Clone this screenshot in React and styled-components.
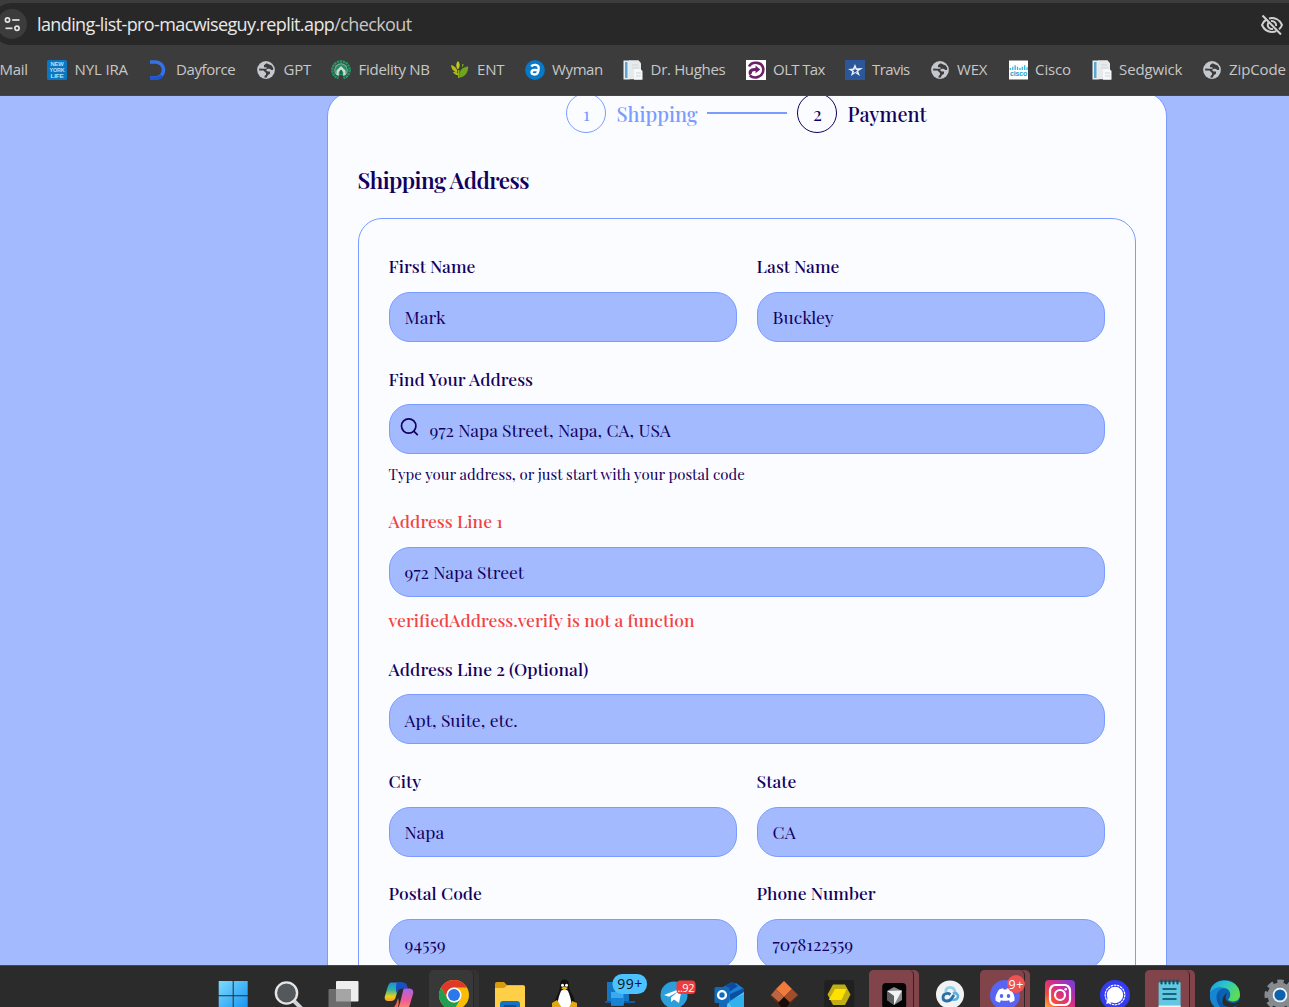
import React from "react";
import styled, { createGlobalStyle } from "styled-components";

const Global = createGlobalStyle`
  * { box-sizing: border-box; }
  html, body { margin: 0; background: #a3baff; overflow: hidden; }
`;

const serif = `"Playfair Display", "Liberation Serif", serif`;
const sans = `"Segoe UI", "Open Sans", sans-serif`;

const Screen = styled.div`
  width: 1289px;
  height: 1007px;
  display: flex;
  flex-direction: column;
  overflow: hidden;
`;

/* ---------- browser chrome ---------- */
const Toolbar = styled.header`
  flex: none;
  height: 96px;
  padding-top: 3px;
  background: #3c3c3c;
  border-bottom: 1px solid #454545;
  font-family: ${sans};
  overflow: hidden;
`;
const AddressBar = styled.div`
  height: 42px;
  margin-left: -9px;
  padding: 0 5px 0 6px;
  display: flex;
  align-items: center;
  background: #282828;
  border-radius: 21px 0 0 21px;
`;
const SiteInfo = styled.span`
  width: 30px;
  height: 30px;
  border-radius: 50%;
  background: #3c3c3c;
  display: flex;
  align-items: center;
  justify-content: center;
`;
const Url = styled.span`
  margin-left: 10px;
  flex: 1;
  font-size: 18px;
  letter-spacing: ${(p) => p.$ls}px;
  line-height: 24px;
  color: #e8e8e8;
  white-space: nowrap;
`;
const Path = styled.span`
  color: #c7c7c7;
`;
const Bookmarks = styled.nav`
  height: 50px;
  display: flex;
  align-items: center;
`;
const Bookmark = styled.div`
  flex: none;
  width: ${(p) => p.$w}px;
  display: flex;
  align-items: center;
  gap: 8px;
  font-size: 15px;
  line-height: 20px;
  color: #c7c7c7;
  letter-spacing: ${(p) => p.$ls}px;
  white-space: nowrap;
  svg { flex: none; }
`;
const BookmarkName = styled.span`
  margin: -2px 0 0 -0.4px;
`;

/* ---------- checkout page ---------- */
const Page = styled.main`
  height: 869px;
  flex: none;
  overflow: hidden;
  display: flex;
  justify-content: center;
  align-items: flex-start;
  padding-left: 205px;
  background: #a3baff;
  color: #12005e;
  font-family: ${serif};
`;
const Card = styled.section`
  width: 840px;
  height: 960px;
  flex: none;
  margin-top: -4px;
  padding: 0 30px;
  border: 1px solid #7b9cff;
  border-radius: 24px;
  background: #fbfcff;
  display: flex;
  flex-direction: column;
`;
const Steps = styled.div`
  height: 40px;
  flex: none;
  display: flex;
  align-items: center;
  padding-left: 208px;
`;
const Step = styled.div`
  width: ${(p) => p.$w}px;
  display: flex;
  align-items: center;
  gap: 10.5px;
  color: ${(p) => p.$color};
`;
const StepDot = styled.span`
  flex: none;
  width: 40px;
  height: 40px;
  padding: 1px 0 0 1px;
  border: 1.5px solid currentColor;
  border-radius: 50%;
  display: flex;
  align-items: center;
  justify-content: center;
  font-size: 18.5px;
  line-height: 20px;
`;
const StepName = styled.span`
  padding-top: 1px;
  font-size: 20px;
  font-weight: 500;
  line-height: 28px;
  white-space: nowrap;
`;
const StepLine = styled.span`
  width: 80px;
  height: 2px;
  margin-right: 10px;
  background: #7b9cff;
`;
const Title = styled.h2`
  flex: none;
  margin: 31px 0 22px -0.5px;
  height: 32px;
  font-size: 22.5px;
  line-height: 32px;
  font-weight: 600;
  letter-spacing: -0.56px;
`;
const Panel = styled.div`
  flex: none;
  height: 800px;
  padding: 36px 30px 0;
  border: 1px solid #7b9cff;
  border-radius: 24px;
  display: flex;
  flex-direction: column;
  gap: 25.4px;
`;
const Row = styled.div`
  display: grid;
  grid-template-columns: ${(p) => (p.$two ? "1fr 1fr" : "1fr")};
  column-gap: 20px;
`;
const Field = styled.div`
  display: flex;
  flex-direction: column;
`;
const Label = styled.label`
  height: 24px;
  margin: -0.7px 0 13.7px -0.4px;
  font-size: 17.5px;
  font-weight: 500;
  line-height: 24px;
  color: ${(p) => (p.$error ? "#ef4444" : "#12005e")};
  white-space: nowrap;
`;
const Control = styled.div`
  height: 50px;
  padding: 0.4px 14.6px 0 ${(p) => (p.$icon ? 8.6 : 14.6)}px;
  border: 1px solid #7b9cff;
  border-radius: 21px;
  background: #a3baff;
  display: flex;
  align-items: center;
  font-size: 17.5px;
  line-height: 24px;
  white-space: nowrap;
  svg { margin: -4.4px 11px 0 0; flex: none; }
`;
const Hint = styled.div`
  height: 30.2px;
  margin-left: -0.4px;
  padding-top: 10px;
  font-size: 15px;
  line-height: 20px;
  white-space: nowrap;
`;
const ErrorText = styled.div`
  height: 35px;
  margin-left: -0.4px;
  padding-top: 11px;
  font-size: 17.5px;
  font-weight: 500;
  line-height: 23px;
  color: #ef4444;
  white-space: nowrap;
`;

/* ---------- taskbar ---------- */
const Taskbar = styled.footer`
  height: 42px;
  flex: none;
  padding: 4px 0 0 208.3px;
  background: #2b2b2b;
  border-top: 1px solid #464848;
  display: flex;
  gap: 5.1px;
  overflow: hidden;
`;
const Slot = styled.div`
  flex: none;
  width: 50px;
  height: 50px;
  border-radius: 5px;
  background: ${(p) => p.$back || "transparent"};
`;
const SlotFront = styled.div`
  width: ${(p) => (p.$front ? 45 : 50)}px;
  height: 50px;
  border-radius: 5px;
  background: ${(p) => p.$front || "transparent"};
  border-right: ${(p) => (p.$front ? "1px solid #2b2525" : "none")};
  svg { display: block; overflow: visible; }
`;

/* ---------- bookmark icons ---------- */
const Ico = ({ children, w = 20 }) => (
  <svg width={w} height="20" viewBox="0 0 20 20">{children}</svg>
);
const Globe = () => (
  <Ico>
    <circle cx="10" cy="10" r="8.9" fill="#c4c7cc" />
    <path d="M10.500 3.200 8 5.200v2h2.500v1.600H6.500L3.400 8.600 3 10.500h4.500l2.500 2.500v1.800L8.500 16v1.500l2 .2 1.500-2.700 2-1.200v-2.300h-2.300l-1.800-1.600 1.800-1.100h1.800l2 1.200h1.600l.1-2-1.500-2.600-2.500-1z" fill="#3c3c3c" />
  </Ico>
);
const Nyl = () => (
  <Ico>
    <rect width="20" height="20" rx="1.500" fill="#0b76c2" />
    <g fontFamily="Liberation Sans" fontWeight="700" fontSize="4.600" fill="#b9e0f7" textAnchor="middle">
      <text x="10" y="6.200" textLength="13" lengthAdjust="spacingAndGlyphs">NEW</text>
      <text x="10" y="11.900" textLength="15" lengthAdjust="spacingAndGlyphs">YORK</text>
      <text x="10" y="17.600" textLength="13" lengthAdjust="spacingAndGlyphs">LIFE</text>
    </g>
  </Ico>
);
const Day = () => (
  <Ico>
    <path d="M1 2h5.500a8 8 0 0 1 0 16H1" fill="none" stroke="#3572e8" strokeWidth="3.600" />
    <path d="M1 16.400h6a7 7 0 0 0 5-2l2 2.400A9 9 0 0 1 7 20H1z" fill="#1f55cf" />
  </Ico>
);
const Fidelity = () => (
  <Ico>
    <circle cx="10" cy="10" r="8.600" fill="none" stroke="#239464" strokeWidth="2.600" strokeDasharray="2.400 .6" />
    <circle cx="10" cy="10" r="6.800" fill="#7fb8a0" />
    <circle cx="10" cy="10" r="5.800" fill="#2b8c64" />
    <path d="M5.500 15v-4.500L10 6l4.500 4.500V15h-2.300v-3L10 9.800 7.800 12v3z" fill="#c5ded2" />
    <path d="M7 20l1.500-5h3L13 20z" fill="#3c3c3c" />
    <path d="M10 10v4" stroke="#165b40" strokeWidth="1.500" />
  </Ico>
);
const Leaf = () => (
  <Ico>
    <path d="M8 1C5.500 4 6 7 7.800 9.500 10 7 10.500 4 8 1z" fill="#c0cc1c" />
    <path d="M1 5c.5 4.500 3 7 6.500 7.500C7.500 9 5 6 1 5zM3 12c1.500 2.500 3.500 3.300 5.500 3-.5-2.500-2.500-3.500-5.500-3z" fill="#b2be18" />
    <path d="M18.300 6.500c-6 .5-9.500 4-8.800 11C15 17 18 13 18.300 6.500zM12 4l2 .5-2 3z" fill="#6ea51c" />
    <path d="M8.700 10v8" stroke="#8fae17" strokeWidth="1.500" />
  </Ico>
);
const Wyman = () => (
  <Ico>
    <circle cx="10" cy="10" r="9.900" fill="#0878c8" />
    <path d="M6.200 6.500c1.500-2.300 7.500-2.300 7.500 1.500 0 3-1 6.500-4.200 6.500-4 0-4-4.300 0-4.500 2-.1 3.500.3 4.500 1" fill="none" stroke="#fff" strokeWidth="2.300" />
  </Ico>
);
const Docs = () => (
  <Ico>
    <path d="M.5.500h6v19h-6z" fill="#e9eef2" />
    <path d="M2 2h2.500v16H2z" fill="#5ca6cf" />
    <path d="M6 .3h9.500l2.500 3v16H6z" fill="#e6eaed" />
    <path d="M11 9h6.500l2 2v8.700H11z" fill="#f6f8f9" />
    <path d="M9 5h6M9 8h7" stroke="#cfd5da" />
    <path d="M13 13h5M13 16h5" stroke="#cdd4d9" />
  </Ico>
);
const Olt = () => (
  <Ico>
    <rect width="20" height="20" fill="#fff" />
    <path d="M3 6.500C6 1 16.500 1.500 17.300 9c.5 8-9 10.500-13.500 6.500" fill="none" stroke="#6b2268" strokeWidth="2.600" />
    <path d="M3.500 15.500c-2.500-5 1-8 6-7.500V5.500l4.800 4-4.800 3.800v-2.300c-2.500-.3-3.700.6-3.500 2.200" fill="#6b2268" />
  </Ico>
);
const Travis = () => (
  <Ico>
    <rect width="20" height="20" fill="#2b579a" />
    <path d="m10 4 1.700 4.300L18 8l-4.800 3.200L15 16l-4.700-3L6 16l1.200-4.600L3 9l5-.5z" fill="#e8edf8" />
    <path d="m10 8 .8 2 2 .1-1.600 1.200.6 1.700-1.700-1-1.700 1 .6-1.900L7.500 10h1.800z" fill="#2b579a" />
  </Ico>
);
const Cisco = () => (
  <Ico w={19}>
    <rect width="20" height="20" fill="#fff" />
    <path d="M1.500 8v2M4 6.500V10M6.500 5V10M9 6.500V10M11.500 8v2M14 6.500V10M16.500 5V10M19 7v3" stroke="#37b5dc" strokeWidth="1.400" />
    <text x="1" y="16" fontSize="7" fontWeight="700" fontFamily="Liberation Sans" fill="#1ba0d0" textLength="18" lengthAdjust="spacingAndGlyphs">cisco</text>
  </Ico>
);

/* ---------- taskbar icons ---------- */
const T = ({ children }) => (
  <svg width="50" height="42" viewBox="0 0 50 42">{children}</svg>
);
const TASKS = [
  {
    art: (
      <T>
        <defs><linearGradient id="win" x1="0" y1="0" x2="1" y2="1"><stop stopColor="#7ddcff" /><stop offset="1" stopColor="#0f8ff0" /></linearGradient></defs>
        <path d="M10.700 11h14v14.200h-14zM25.700 11h14v14.200h-14zM10.700 26.200h14V41h-14zM25.700 26.200h14V41h-14z" fill="url(#win)" />
      </T>
    ),
  },
  {
    art: (
      <T>
        <path d="m31 31 9 9" stroke="#cfd3d5" strokeWidth="4" />
        <circle cx="23.500" cy="23" r="10.600" fill="#55585a" stroke="#e3e5e6" strokeWidth="2.400" />
      </T>
    ),
  },
  {
    art: (
      <T>
        <rect x="18" y="11" width="22.500" height="20.500" rx="1" fill="#efefef" />
        <rect x="10.500" y="19" width="22.500" height="22" rx="1" fill="#6c6c6c" />
        <rect x="18" y="19" width="15" height="12.500" fill="#a5a5a5" />
      </T>
    ),
  },
  {
    art: (
      <T>
        <defs>
          <linearGradient id="cpa" x1="0" y1="0" x2="0" y2="1"><stop stopColor="#1a8fe8" /><stop offset=".4" stopColor="#32b39b" /><stop offset=".75" stopColor="#e9cf1f" /><stop offset="1" stopColor="#f5a02c" /></linearGradient>
          <linearGradient id="cpb" x1="0" y1="0" x2="0" y2="1"><stop stopColor="#a765ee" /><stop offset=".5" stopColor="#ee5a9a" /><stop offset="1" stopColor="#ff9860" /></linearGradient>
        </defs>
        <path d="M17.500 12.500H29c-3 1-4 4-5 7l-2.500 8c-.5 2-2 3.500-4.500 3.500h-2.500c-3 0-4.500-2-3.500-5l2.500-8.500c1-3 2-5 4-5z" fill="url(#cpa)" />
        <path d="M23 12.500h6c3 0 4 2 5 6h-5c-3 0-5 1-6.500 4.500-1-4-.5-8.500.5-10.500z" fill="#174fc4" />
        <path d="M31 18.500h4c3.500 0 5 2.500 4 5.500l-3 10c-1 4-3 7-6 7H20c4-1 5-4 6-8l3-12c.5-2 .5-2.500 2-2.500z" fill="url(#cpb)" />
        <path d="M20 37c2-2 3-5 4-9 1 3 1 6 0 9l-2 4h-4z" fill="#f4694e" />
      </T>
    ),
  },
  {
    front: "#383838",
    back: "#333",
    art: (
      <T>
        <circle cx="25" cy="25" r="15" fill="#fbbc05" />
        <path d="M12 17.500A15 15 0 0 1 38 17.500H25a7.500 7.500 0 0 0-6.500 11.200z" fill="#e0392b" />
        <path d="M12 17.500 18.500 28.700A7.500 7.500 0 0 0 31.500 28.700L25 40A15 15 0 0 1 12 17.500z" fill="#1f9d50" />
        <circle cx="25" cy="25" r="7.600" fill="#fff" />
        <circle cx="25" cy="25" r="6" fill="#2b78ea" />
      </T>
    ),
  },
  {
    art: (
      <T>
        <path d="M11 14q0-2 2-2h7l3 3h16q2 0 2 2v4H11z" fill="#d99a0c" />
        <path d="M11 18h9l3-2.500h16q2 0 2 2v23.500H11z" fill="#ffcf48" />
        <path d="M16 41v-7q0-3 3-3h14q3 0 3 3v7z" fill="#1273c5" />
        <path d="M20 36h12" stroke="#0a4f92" strokeWidth="2" />
      </T>
    ),
  },
  {
    art: (
      <T>
        <path d="M21 14c0-6 9-6 9 0 0 5 1 7 4 12 2 4 2 9 0 15H17c-2-6-2-10 1-15 2-4 3-7 3-12z" fill="#101010" />
        <path d="M22 21c2-2 5-2 7 0 2 5 4 10 3 16-4 4-9 4-13 0-1-6 1-11 3-16z" fill="#fff" />
        <circle cx="23.500" cy="15.300" r="1.500" fill="#fff" /><circle cx="27.500" cy="15.300" r="1.500" fill="#fff" />
        <path d="m22 18 3.500-1.500L29 18l-3.500 2.500z" fill="#efb018" />
        <path d="m13 33 5-3 5 8-1 4h-9zM38 33l-5-2-3 7 1 4h7z" fill="#e2a713" />
      </T>
    ),
  },
  {
    art: (
      <T>
        <path d="M13 12h22v20H13z" fill="#1377c4" />
        <path d="M11 31h30v2H11z" fill="#0c5b9d" />
        <path d="M17 22h12.500v13.500H17z" fill="#37aaf0" />
        <path d="M17 28h12.500v7.500H17z" fill="#1883d4" />
        <rect x="18.500" y="4" width="34.500" height="20" rx="9.500" fill="#4cc2ff" />
        <text x="35.800" y="19" fontFamily="Segoe UI, Open Sans" fontSize="14" fill="#101010" textAnchor="middle" textLength="25">99+</text>
      </T>
    ),
  },
  {
    art: (
      <T>
        <circle cx="25" cy="25" r="13.500" fill="#2b9fda" />
        <path d="m15 25 18-7-3 15-5-3.500-3 2.500v-4.500l7-6-9 5.200z" fill="#fff" />
        <rect x="27.500" y="10.500" width="19" height="13.500" rx="4" fill="#ee3c3c" />
        <text x="37" y="21.500" fontFamily="Segoe UI, Open Sans" fontSize="11" fill="#fff" textAnchor="middle" textLength="17">..92</text>
      </T>
    ),
  },
  {
    art: (
      <T>
        <path d="m15 19 13-7L40 19v22H15z" fill="#1267b8" />
        <path d="m19 22 13-9 8 6-17 13z" fill="#1a7fd6" />
        <path d="M24 31 40 20v21H22z" fill="#50c8f5" />
        <path d="m24 31 16-7v17H30z" fill="#2fb1ee" />
        <path d="m22 16 6-3.700 6 3.700-9 6z" fill="#0a4ca2" />
        <path d="m26 24 14-6v4l-14 9z" fill="#0b4fa5" />
        <rect x="10.500" y="17" width="15" height="16" rx="1.500" fill="#0f6cbd" />
        <circle cx="18" cy="25" r="3.900" fill="none" stroke="#fff" strokeWidth="2.400" />
      </T>
    ),
  },
  {
    art: (
      <T>
        <path d="m25 11 14 14.500L25 41 11 25.500z" fill="#5e2a18" />
        <path d="m25 11 8 8-8 8-8-8z" fill="#f17a3d" />
        <path d="m17 19 8 8-5 5-8-7z" fill="#bc6540" /><path d="m33 19 6 6-8 7-6-5z" fill="#a14c2b" />
        <path d="m25 27 6 6-6 8-6-8z" fill="#160c09" />
      </T>
    ),
  },
  {
    art: (
      <T>
        <rect x="10.200" y="10" width="30" height="31" rx="3" fill="#202020" />
        <path d="M19 14.500h12l5.500 10L31 35H19l-5.500-10.500z" fill="#c1ae13" />
        <path d="M21 19h11.500l-5 11H14.800z" fill="#ffe100" />
      </T>
    ),
  },
  {
    front: "#80444a",
    back: "#80444a",
    art: (
      <T>
        <rect x="13.200" y="13" width="24" height="26" rx="4" fill="#050505" />
        <path d="m25 17 8 4v9l-8 5-7-5v-9z" fill="#8c8c8c" />
        <path d="m18 21 15-.5L25 35V26z" fill="#f2f2f2" /><path d="m18 21 7 5v9l-7-5z" fill="#5f5f5f" />
      </T>
    ),
  },
  {
    art: (
      <T>
        <circle cx="25" cy="24.500" r="14" fill="#f0f2f3" />
        <path d="M21 22.500c-1.500-7 9.500-7 9 .5" fill="none" stroke="#8fd0ee" strokeWidth="2.800" />
        <path d="M28 23.500c3.500-1.500 6 1.500 4.500 4.500-1.300 2.300-5 2.300-7 .5" fill="none" stroke="#5db0dc" strokeWidth="2.600" />
        <path d="M25.500 24.500c-3-2-7.500-1-7.500 3 0 4.500 6.500 4.500 8.500 1l2.500-3.500" fill="none" stroke="#2a6fa9" strokeWidth="2.800" />
      </T>
    ),
  },
  {
    front: "#80444a",
    back: "#80444a",
    art: (
      <T>
        <circle cx="25" cy="25" r="15" fill="#5865f2" />
        <path d="M19 19.500c1.500-.8 3-1.200 4-1.300l.7 1.300h2.600l.7-1.300c1.500.2 3 .7 4 1.300 2.500 3.500 4 7.500 3.500 11-1.500 1.200-3 1.700-4.300 2l-1.200-2.200c-2.500.7-5.500.7-8 0L19.800 32.500c-1.500-.3-3-.9-4.300-2-.5-3.800 1-7.500 3.500-11z" fill="#fff" />
        <ellipse cx="21.500" cy="26" rx="1.800" ry="2" fill="#5865f2" /><ellipse cx="28.500" cy="26" rx="1.800" ry="2" fill="#5865f2" />
        <circle cx="36" cy="14" r="9" fill="#ee5253" />
        <text x="36" y="18.500" fontFamily="Segoe UI, Open Sans" fontSize="12.500" fill="#fff" textAnchor="middle" textLength="15">9+</text>
      </T>
    ),
  },
  {
    art: (
      <T>
        <defs>
          <linearGradient id="ig" x1="0" y1="1" x2="1" y2="0"><stop stopColor="#ffc63c" /><stop offset=".3" stopColor="#f7483c" /><stop offset=".6" stopColor="#cf2d91" /><stop offset="1" stopColor="#6b3fe0" /></linearGradient>
        </defs>
        <rect x="10" y="10" width="30" height="30" rx="4" fill="url(#ig)" />
        <rect x="15" y="15" width="20" height="20" rx="5.500" fill="none" stroke="#fff" strokeWidth="2.200" />
        <circle cx="25" cy="25" r="5" fill="none" stroke="#fff" strokeWidth="2.200" /><circle cx="30.700" cy="19.300" r="1.300" fill="#fff" />
      </T>
    ),
  },
  {
    art: (
      <T>
        <circle cx="25" cy="25" r="15" fill="#333cf0" />
        <circle cx="25" cy="25" r="9.800" fill="none" stroke="#fff" strokeWidth="1.200" strokeDasharray="2.500 .7" />
        <circle cx="25" cy="25" r="8.200" fill="#fff" /><path d="m18 27-2 7 7-2z" fill="#fff" />
      </T>
    ),
  },
  {
    front: "#80444a",
    back: "#80444a",
    art: (
      <T>
        <rect x="13.600" y="12" width="22" height="29" rx="1.500" fill="#62c7e0" />
        <path d="M13.600 35.500h22V41h-22z" fill="#f1f3f4" />
        <path d="M16.500 10.500v3M20.500 10.500v3M24.500 10.500v3M28.500 10.500v3M32.500 10.500v3" stroke="#124f63" strokeWidth="2.200" strokeLinecap="round" />
        <path d="M17.500 19h14M17.500 24h14M17.500 29h14" stroke="#17647e" strokeWidth="1.800" />
      </T>
    ),
  },
  {
    art: (
      <T>
        <defs>
          <linearGradient id="edge" x1="0" y1="0" x2="1" y2=".4"><stop stopColor="#1a9be0" /><stop offset=".5" stopColor="#2bc6c8" /><stop offset="1" stopColor="#5bdc58" /></linearGradient>
        </defs>
        <circle cx="25" cy="25" r="15" fill="#0c62b0" />
        <path d="M10 23C10 6 40 6 40 25c0 6-7 8-12 5 4-4 3-12-5-12-6 0-10 2-13 5z" fill="url(#edge)" />
        <path d="M10 24c2-6 9-8 14-6-6 1-9 7-7 13 1 4 4 7 8 9C15 41 9 33 10 24z" fill="#1586d4" />
        <path d="M28 22c-3 3-4 8 1 10 4 2 8 1 11-2v11H28c-7-5-8-14 0-19z" fill="#2b2b2b" />
        <path d="M21 22c-4 6 0 14 8 15 4 .5 7-1 9-3-3 5-8 6-12 6-8-1-12-13-5-18z" fill="#0a55a4" />
      </T>
    ),
  },
  {
    art: (
      <T>
        <circle cx="25" cy="25" r="10" fill="none" stroke="#868b90" strokeWidth="5" />
        <circle cx="25" cy="25" r="13" fill="none" stroke="#868b90" strokeWidth="5" strokeDasharray="6.200 4.010" strokeDashoffset="3" />
        <circle cx="25" cy="25" r="7.500" fill="#f1f3f4" /><circle cx="25" cy="25" r="5.600" fill="#0c62ae" />
      </T>
    ),
  },
];

const BOOKMARKS = [
  ["Mail", 47, null, -0.3],
  ["NYL IRA", 101.5, Nyl, -0.15],
  ["Dayforce", 107.5, Day, -0.42],
  ["GPT", 75, Globe, -0.3],
  ["Fidelity NB", 118.5, Fidelity, -0.3],
  ["ENT", 75, Leaf, -0.3],
  ["Wyman", 98.5, Wyman, -0.42],
  ["Dr. Hughes", 122.5, Docs, -0.33],
  ["OLT Tax", 99, Olt, -0.65],
  ["Travis", 85, Travis, -0.6],
  ["WEX", 79, Globe, -0.3],
  ["Cisco", 83, Cisco, -0.15],
  ["Sedgwick", 110, Docs, -0.15],
  ["ZipCode", 100, Globe, -0.15],
];

const Input = ({ label, value, error, icon, children }) => (
  <Field>
    <Label $error={error}>{label}</Label>
    <Control $icon={!!icon}>{icon}<span>{value}</span></Control>
    {children}
  </Field>
);

const SearchIcon = () => (
  <svg width="20" height="20" viewBox="0 0 20 20" fill="none" stroke="#12005e" strokeWidth="1.700" strokeLinecap="round">
    <circle cx="9.700" cy="9" r="7.200" /><path d="m15 14.300 3.300 3.300" />
  </svg>
);

export default function App() {
  return (
    <Screen>
      <Global />
      <Toolbar>
        <AddressBar>
          <SiteInfo>
            <svg width="18" height="18" viewBox="0 0 18 18" fill="none" stroke="#e3e3e3" strokeWidth="1.700">
              <circle cx="4.500" cy="5" r="2.100" /><path d="M9.200 5H16.500" />
              <circle cx="14" cy="13.300" r="2.100" /><path d="M2.500 13.300h7" />
            </svg>
          </SiteInfo>
          <Url $ls={-0.61}>landing-list-pro-macwiseguy.replit.app<Path>/checkout</Path></Url>
          <svg width="24" height="22" viewBox="0 0 24 22" fill="none" stroke="#d0d0d0" strokeWidth="2">
            <path d="M6.500 6.500C4.500 7.600 3 9.500 2 12c2 4.500 5.500 7 10 7 1.600 0 3-.3 4.300-.9M9 5.400c5.500-1.200 10.600 1.300 13 6.600-.7 1.800-1.700 3.200-3 4.300" />
            <path d="M8.500 9.500c-2 3.500.5 7 4.500 6.500M11 8c3-.5 5.500 2 5 5" />
            <path d="m2.500 2.500 18.500 19" />
          </svg>
        </AddressBar>
        <Bookmarks>
          {BOOKMARKS.map(([name, w, Icon, ls]) => (
            <Bookmark key={name} $w={w} $ls={ls}>{Icon && <Icon />}<BookmarkName>{name}</BookmarkName></Bookmark>
          ))}
        </Bookmarks>
      </Toolbar>

      <Page>
        <Card>
          <Steps>
            <Step $w={141} $color="#7b9cff"><StepDot>1</StepDot><StepName>Shipping</StepName></Step>
            <StepLine />
            <Step $w={140} $color="#12005e"><StepDot>2</StepDot><StepName>Payment</StepName></Step>
          </Steps>
          <Title>Shipping Address</Title>
          <Panel>
            <Row $two>
              <Input label="First Name" value="Mark" />
              <Input label="Last Name" value="Buckley" />
            </Row>
            <Row>
              <Input label="Find Your Address" value="972 Napa Street, Napa, CA, USA" icon={<SearchIcon />}>
                <Hint>Type your address, or just start with your postal code</Hint>
              </Input>
            </Row>
            <Row>
              <Input label="Address Line 1" value="972 Napa Street" error>
                <ErrorText>verifiedAddress.verify is not a function</ErrorText>
              </Input>
            </Row>
            <Row>
              <Input label="Address Line 2 (Optional)" value="Apt, Suite, etc." />
            </Row>
            <Row $two>
              <Input label="City" value="Napa" />
              <Input label="State" value="CA" />
            </Row>
            <Row $two>
              <Input label="Postal Code" value="94559" />
              <Input label="Phone Number" value="7078122559" />
            </Row>
          </Panel>
        </Card>
      </Page>

      <Taskbar>
        {TASKS.map((t, i) => (
          <Slot key={i} $back={t.back}><SlotFront $front={t.front}>{t.art}</SlotFront></Slot>
        ))}
      </Taskbar>
    </Screen>
  );
}
